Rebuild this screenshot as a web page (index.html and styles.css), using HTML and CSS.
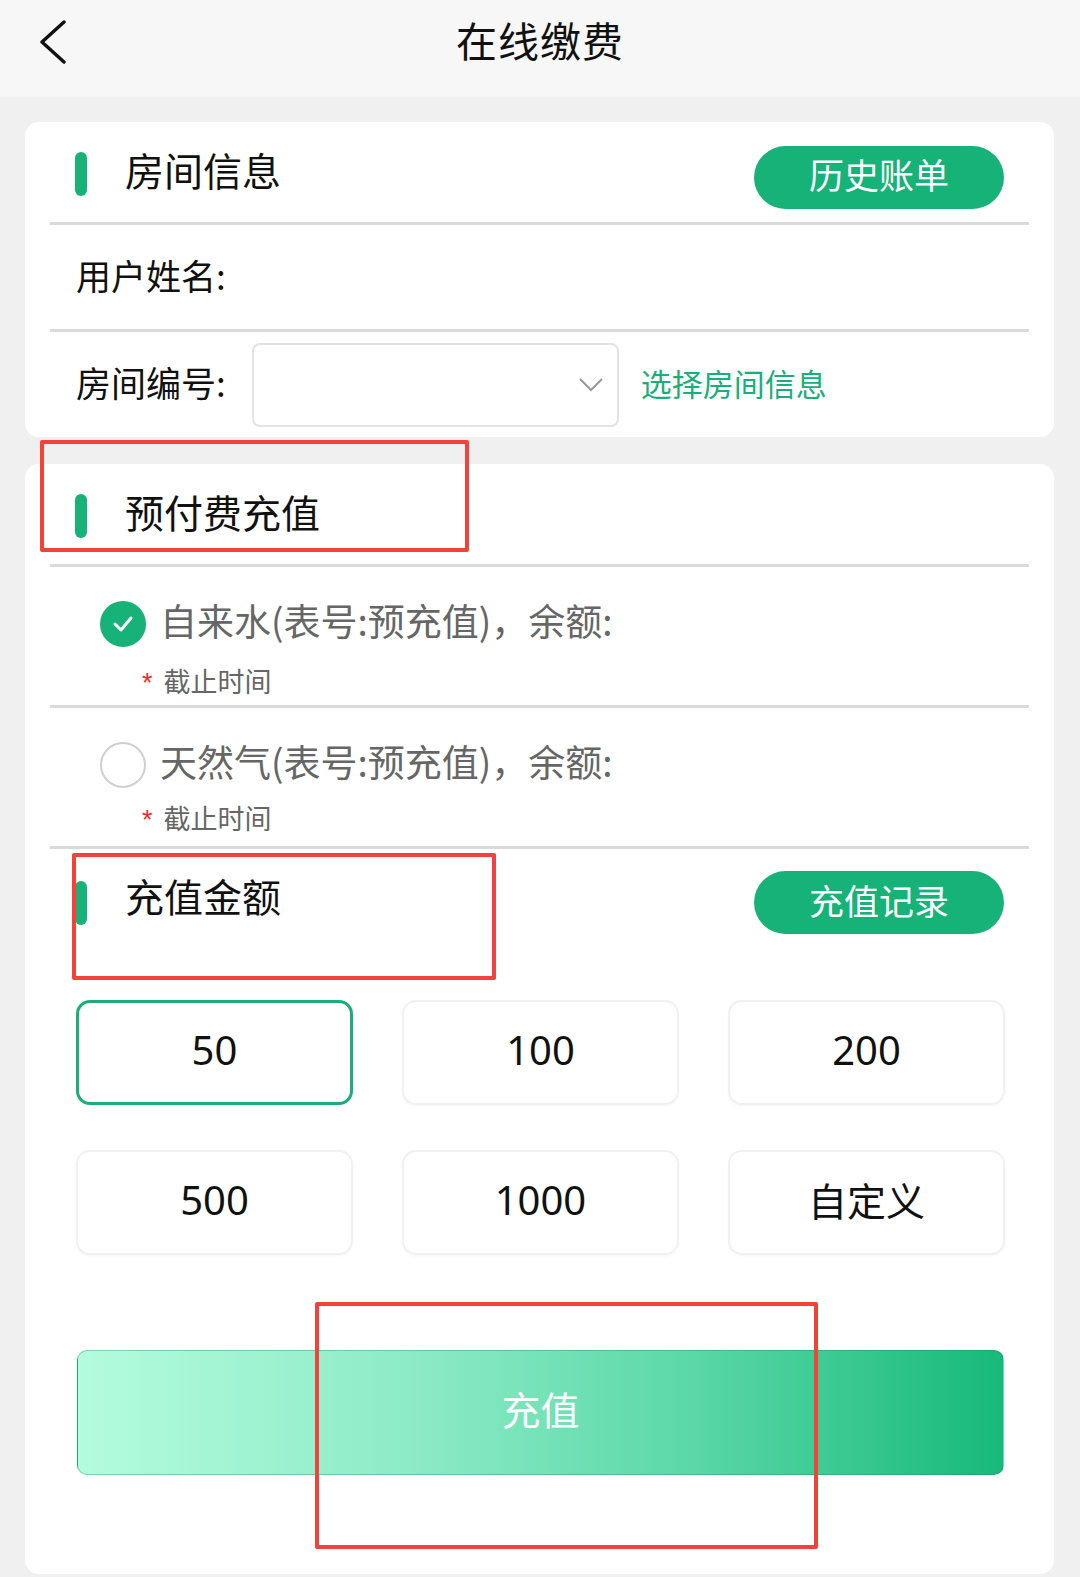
FILE: index.html
```html
<!DOCTYPE html>
<html lang="zh-CN">
<head>
<meta charset="utf-8">
<title>在线缴费</title>
<link rel="stylesheet" href="styles.css">
</head>
<body>
<div class="page">
  <header class="topbar">
    <svg class="back" width="30" height="44" viewBox="0 0 30 44"><path d="M26 2 L4 22 L26 42" fill="none" stroke="#111" stroke-width="3.4" stroke-linecap="round" stroke-linejoin="round"/></svg>
    <h1 class="title">在线缴费</h1>
  </header>

  <main class="content">
    <section class="card">
      <div class="sec-head">
        <div class="sec-title"><span class="bar"></span>房间信息</div>
        <button class="pill">历史账单</button>
      </div>
      <div class="divider"></div>
      <div class="row">用户姓名:</div>
      <div class="divider"></div>
      <div class="row room">
        <span>房间编号:</span>
        <div class="select">
          <svg width="26" height="16" viewBox="0 0 26 16"><path d="M2 2 L13 13 L24 2" fill="none" stroke="#999" stroke-width="2"/></svg>
        </div>
        <span class="link">选择房间信息</span>
      </div>
    </section>

    <section class="card card2">
      <div class="sec-head">
        <div class="sec-title"><span class="bar"></span>预付费充值</div>
      </div>
      <div class="divider"></div>
      <div class="option">
        <div class="opt-line">
          <span class="radio checked"><svg width="24" height="20" viewBox="0 0 24 20"><path d="M4 10 L10 16 L20 4" fill="none" stroke="#fff" stroke-width="3" stroke-linecap="round" stroke-linejoin="round"/></svg></span>
          <span class="opt-text">自来水(表号:预充值)，余额:</span>
        </div>
        <div class="deadline"><span class="star">*</span>截止时间</div>
      </div>
      <div class="divider"></div>
      <div class="option opt2">
        <div class="opt-line">
          <span class="radio"></span>
          <span class="opt-text">天然气(表号:预充值)，余额:</span>
        </div>
        <div class="deadline"><span class="star">*</span>截止时间</div>
      </div>
      <div class="divider"></div>
      <div class="amount-head">
        <div class="sec-title"><span class="bar"></span>充值金额</div>
        <button class="pill">充值记录</button>
      </div>
      <div class="amounts">
        <div class="amt selected">50</div>
        <div class="amt">100</div>
        <div class="amt">200</div>
        <div class="amt">500</div>
        <div class="amt">1000</div>
        <div class="amt cn">自定义</div>
      </div>
      <button class="submit">充值</button>
    </section>
  </main>

  <div class="mark mark1"></div>
  <div class="mark mark2"></div>
  <div class="mark mark3"></div>
</div>
</body>
</html>
```

FILE: styles.css
```css
* { box-sizing: border-box; }
html, body { margin: 0; padding: 0; }
body {
  background: #f0f0f0;
  font-family: "Noto Sans CJK SC", "Noto Sans", sans-serif;
  color: #111;
}
.page {
  position: relative;
  width: 1080px;
  min-height: 1577px;
  overflow: hidden;
}
.topbar {
  height: 97px;
  background: #f7f7f7;
  display: flex;
  align-items: center;
  justify-content: center;
  position: relative;
}
.back {
  position: absolute;
  left: 38px;
  top: 20px;
}
.title {
  margin: 0;
  font-size: 41px;
  font-weight: 400;
  line-height: 1;
  margin-top: -18px;
  letter-spacing: 1px;
}
.content {
  padding: 25px 26px 0 25px;
  display: flex;
  flex-direction: column;
  gap: 27px;
}
.card {
  background: #fff;
  border-radius: 14px;
  padding: 0 25px;
}
.sec-head {
  height: 100px;
  display: flex;
  align-items: center;
  justify-content: space-between;
  padding: 0 25px 0 25px;
}
.sec-title {
  display: flex;
  align-items: center;
  font-size: 39px;
  line-height: 1;
}
.sec-head .sec-title { margin-top: -6px; }
.bar {
  display: inline-block;
  width: 12px;
  height: 44px;
  border-radius: 6px;
  background: #16b277;
  margin-right: 38px;
}
.sec-head .bar { margin-top: 10px; }
.pill {
  width: 250px;
  height: 63px;
  border: none;
  border-radius: 32px;
  background: #16b277;
  color: #fff;
  font-family: inherit;
  font-size: 35px;
  line-height: 1;
  padding: 0 0 7px 0;
  margin-top: 10px;
}
.divider {
  height: 3px;
  background: #dadada;
}
.row {
  height: 104px;
  display: flex;
  align-items: center;
  padding-left: 26px;
  padding-bottom: 6px;
  font-size: 35px;
  color: #111;
}
.row.room { height: 105px; padding-bottom: 0; }
.row.room > span:first-child { padding-bottom: 6px; }
.select {
  width: 367px;
  height: 84px;
  margin-left: 26px;
  border: 2px solid #e3e3e3;
  border-radius: 8px;
  display: flex;
  align-items: center;
  justify-content: flex-end;
  padding-right: 13px;
}
.link {
  margin-left: 22px;
  font-size: 31px;
  color: #1aaf7a;
  padding-bottom: 4px;
}
.option {
  padding: 34px 0 6px 50px;
  height: 138px;
}
.opt-line {
  display: flex;
  align-items: center;
  height: 46px;
  font-size: 37px;
  color: #666;
}
.opt-text { padding-bottom: 8px; margin-left: -2px; }
.radio {
  width: 46px;
  height: 46px;
  border-radius: 50%;
  border: 2px solid #cfcfcf;
  margin-right: 16px;
  display: flex;
  align-items: center;
  justify-content: center;
  flex: none;
}
.radio.checked {
  background: #16b277;
  border-color: #16b277;
}
.deadline {
  margin-top: 16px;
  height: 36px;
  line-height: 36px;
  font-size: 27px;
  color: #666;
  padding-left: 42px;
}
.opt2 .deadline { margin-top: 12px; }
.star {
  color: #f02d2d;
  margin-right: 11px;
  font-family: "Liberation Sans", sans-serif;
}
.amount-head {
  display: flex;
  justify-content: space-between;
  align-items: flex-start;
  padding: 22px 25px 0 25px;
  height: 151px;
}
.amount-head .pill { margin-top: 0; }
.amount-head .bar { margin-top: 16px; }
.amount-head .sec-title { margin-top: -6px; }
.amounts {
  display: grid;
  grid-template-columns: repeat(3, 277px);
  column-gap: 49px;
  row-gap: 45px;
  padding-left: 26px;
}
.amt {
  height: 105px;
  border: 2px solid #f1f1f1;
  border-radius: 14px;
  box-shadow: 0 1px 3px rgba(0,0,0,0.04);
  display: flex;
  align-items: center;
  justify-content: center;
  font-family: "Noto Sans", sans-serif;
  font-size: 40px;
  color: #111;
  padding-bottom: 6px;
}
.amt.cn { font-family: "Noto Sans CJK SC", sans-serif; font-size: 39px; padding-bottom: 8px; }
.amt.selected { border: 3px solid #1aaf7a; }
.submit {
  display: flex;
  align-items: center;
  justify-content: center;
  margin: 95px 0 0 27px;
  width: 927px;
  height: 125px;
  border: 1px solid rgba(20,140,90,0.35);
  border-radius: 10px;
  background: linear-gradient(90deg, #b3fcdd 0%, #8eebc7 35%, #5dd9a9 65%, #17b97a 100%);
  color: #fff;
  font-family: inherit;
  font-size: 39px;
  padding: 0 0 10px 0;
}
.card2 { height: 1110px; }
.mark {
  position: absolute;
  border: 4px solid #f4423a;
  border-radius: 2px;
}
.mark1 { left: 40px; top: 440px; width: 429px; height: 112px; }
.mark2 { left: 72px; top: 853px; width: 424px; height: 127px; }
.mark3 { left: 315px; top: 1302px; width: 503px; height: 247px; }
```
